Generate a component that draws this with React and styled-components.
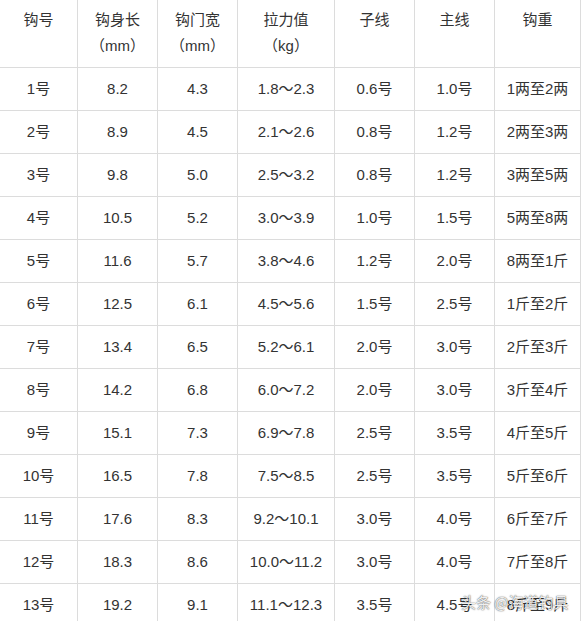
import React from 'react';
import styled, { createGlobalStyle } from 'styled-components';

const rows = [
  ['1号', '8.2', '4.3', '1.8～2.3', '0.6号', '1.0号', '1两至2两'],
  ['2号', '8.9', '4.5', '2.1～2.6', '0.8号', '1.2号', '2两至3两'],
  ['3号', '9.8', '5.0', '2.5～3.2', '0.8号', '1.2号', '3两至5两'],
  ['4号', '10.5', '5.2', '3.0～3.9', '1.0号', '1.5号', '5两至8两'],
  ['5号', '11.6', '5.7', '3.8～4.6', '1.2号', '2.0号', '8两至1斤'],
  ['6号', '12.5', '6.1', '4.5～5.6', '1.5号', '2.5号', '1斤至2斤'],
  ['7号', '13.4', '6.5', '5.2～6.1', '2.0号', '3.0号', '2斤至3斤'],
  ['8号', '14.2', '6.8', '6.0～7.2', '2.0号', '3.0号', '3斤至4斤'],
  ['9号', '15.1', '7.3', '6.9～7.8', '2.5号', '3.5号', '4斤至5斤'],
  ['10号', '16.5', '7.8', '7.5～8.5', '2.5号', '3.5号', '5斤至6斤'],
  ['11号', '17.6', '8.3', '9.2～10.1', '3.0号', '4.0号', '6斤至7斤'],
  ['12号', '18.3', '8.6', '10.0～11.2', '3.0号', '4.0号', '7斤至8斤'],
  ['13号', '19.2', '9.1', '11.1～12.3', '3.5号', '4.5号', '8斤至9斤'],
];

const headers = [
  ['钩号'],
  ['钩身长', '（mm）'],
  ['钩门宽', '（mm）'],
  ['拉力值', '（kg）'],
  ['子线'],
  ['主线'],
  ['钩重'],
];

const widths = [78, 80, 80, 97, 80, 80, 86];

function App() {
  return (
    <>
      <GlobalStyle />
      <Page>
        <Table>
          <colgroup>
            {widths.map((w, i) => (
              <col key={i} style={{ width: w }} />
            ))}
          </colgroup>
          <thead>
            <tr>
              {headers.map((h, i) => (
                <Th key={i}>
                  {h.map((line, j) => (
                    <HeadLine key={j}>{line}</HeadLine>
                  ))}
                </Th>
              ))}
            </tr>
          </thead>
          <tbody>
            {rows.map((r, idx) => (
              <tr key={idx}>
                {r.map((c, j) => (
                  <Td key={j}>{c}</Td>
                ))}
              </tr>
            ))}
          </tbody>
        </Table>
        <Watermark>头条 @海道钓具</Watermark>
      </Page>
    </>
  );
}
export default App;

const GlobalStyle = createGlobalStyle`
  html, body {
    margin: 0;
    padding: 0;
    background: #fff;
    overflow: hidden;
  }
  body {
    font-family: "Liberation Sans", "Noto Sans CJK SC", sans-serif;
    color: #333;
  }
`;

const Page = styled.div`
  position: relative;
  width: 582px;
  height: 621px;
  overflow: hidden;
`;

const Table = styled.table`
  border-collapse: collapse;
  table-layout: fixed;
  width: 582px;
  margin: -1px 0 0 -1px;
  font-size: 15px;
  color: #333;
`;

const Th = styled.th`
  height: 68px;
  box-sizing: border-box;
  padding: 7px 0 0 0;
  vertical-align: top;
  font-weight: normal;
  text-align: center;
  border: 1px solid #dcdcdc;
`;

const HeadLine = styled.div`
  line-height: 26px;
  white-space: nowrap;
`;

const Td = styled.td`
  height: 43px;
  box-sizing: border-box;
  padding: 0;
  text-align: center;
  vertical-align: middle;
  line-height: 26px;
  white-space: nowrap;
  border: 1px solid #dcdcdc;
`;

const Watermark = styled.div`
  position: absolute;
  left: 461px;
  top: 591px;
  font-size: 15px;
  font-family: "Noto Sans CJK SC", sans-serif;
  color: rgba(255, 255, 255, 0.92);
  text-shadow: 0 0 1px rgba(0, 0, 0, 0.7), 0 0 2px rgba(0, 0, 0, 0.35);
  white-space: nowrap;
`;
